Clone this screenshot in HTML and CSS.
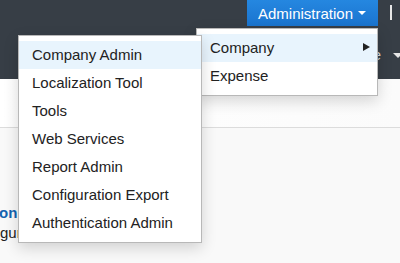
FILE: index.html
```html
<!DOCTYPE html>
<html>
<head>
<meta charset="utf-8">
<link rel="stylesheet" href="styles.css">
</head>
<body>
<div class="page">
  <header class="topbar">
    <div class="toprow">
      <div class="admin-btn">Administration <span class="caret"></span></div>
      <div class="sep"></div>
    </div>
    <div class="subrow">
      <span class="profile">Profile</span><span class="caret dark-caret"></span>
    </div>
  </header>
  <div class="toolbar"></div>
  <main class="content">
    <div class="card">
      <div class="card-title">Configuration</div>
      <div class="card-desc">Configure system settings</div>
    </div>
  </main>

  <div class="menu admin-menu">
    <div class="item active">Company <span class="arrow"></span></div>
    <div class="item">Expense</div>
  </div>
  <div class="menu company-menu">
    <div class="item active">Company Admin</div>
    <div class="item">Localization Tool</div>
    <div class="item">Tools</div>
    <div class="item">Web Services</div>
    <div class="item">Report Admin</div>
    <div class="item">Configuration Export</div>
    <div class="item">Authentication Admin</div>
  </div>
</div>
</body>
</html>
```
FILE: styles.css
```css
* { box-sizing: border-box; }
html, body { margin: 0; padding: 0; }
body {
  width: 400px;
  height: 263px;
  overflow: hidden;
  font-family: "Liberation Sans", Arial, sans-serif;
  font-size: 15px;
  background: #f9f9f9;
}
.page { position: relative; width: 400px; height: 263px; overflow: hidden; }

.topbar {
  height: 79px;
  background: #373e46;
  display: flex;
  flex-direction: column;
}
.toprow {
  display: flex;
  justify-content: flex-end;
  align-items: flex-start;
  height: 26px;
}
.admin-btn {
  height: 26px;
  width: 131px;
  margin-right: 12px;
  padding-left: 11px;
  background: linear-gradient(#2587e0, #1a74cf);
  color: #fff;
  line-height: 25px;
  display: flex;
  align-items: center;
  gap: 5px;
}
.caret {
  display: inline-block;
  width: 0; height: 0;
  border-left: 4px solid transparent;
  border-right: 4px solid transparent;
  border-top: 4px solid #fff;
}
.sep {
  width: 2px;
  height: 15px;
  margin-top: 5px;
  margin-right: 8px;
  background: #e6e6e6;
}
.subrow {
  display: flex;
  justify-content: flex-end;
  align-items: center;
  margin-top: 20px;
  margin-right: -3px;
  color: #d8d8d8;
  gap: 12px;
  line-height: 18px;
}
.dark-caret { border-top-color: #e6e6e6; border-left-width: 5px; border-right-width: 5px; border-top-width: 5px; }

.toolbar {
  height: 49px;
  background: linear-gradient(90deg, #ffffff 0%, #fbfbfb 100%);
  border-bottom: 1px solid #dcdcdc;
}
.content { padding: 75px 0 0 0; }
.card-title {
  margin-left: -81px;
  color: #1463b0;
  font-weight: bold;
  line-height: 20px;
}
.card-desc {
  margin-left: -35px;
  color: #222;
  line-height: 20px;
}

.menu {
  position: absolute;
  background: #fff;
  border: 1px solid rgba(0,0,0,0.28);
  box-shadow: 0 5px 14px rgba(0,0,0,0.16);
  padding: 5px 0;
  color: #222;
}
.item {
  height: 28px;
  line-height: 28px;
  padding: 0 13px;
  display: flex;
  align-items: center;
  justify-content: space-between;
  white-space: nowrap;
}
.item.active { background: #e8f4fd; }
.arrow {
  width: 0; height: 0;
  border-top: 4px solid transparent;
  border-bottom: 4px solid transparent;
  border-left: 7px solid #222;
  margin-right: -6px;
  margin-top: -2px;
}
.admin-menu { left: 196px; top: 28px; width: 182px; z-index: 1; }
.company-menu { left: 18px; top: 35px; width: 184px; z-index: 2; }
```
